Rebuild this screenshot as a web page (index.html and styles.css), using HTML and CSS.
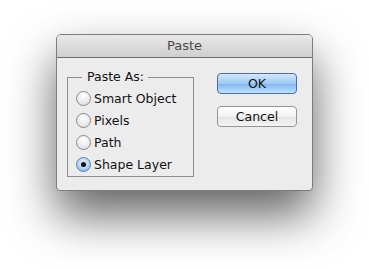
FILE: index.html
```html
<html>
<head>
    <meta charset="utf-8">
    <title>Paste</title>
    <link rel="stylesheet" href="styles.css">
</head>
<body>
<div class="window">
    <div class="titlebar">Paste</div>
    <div class="content">
        <fieldset class="group">
            <legend>Paste As:</legend>
            <label class="option"><span class="radio"></span>Smart Object</label>
            <label class="option"><span class="radio"></span>Pixels</label>
            <label class="option"><span class="radio"></span>Path</label>
            <label class="option"><span class="radio checked"></span>Shape Layer</label>
        </fieldset>
        <div class="buttons">
            <div class="btn default">OK</div>
            <div class="btn">Cancel</div>
        </div>
    </div>
</div>
</body>
</html>
```

FILE: styles.css
```css
*{
    margin: 0px;
    padding: 0px;
    box-sizing: border-box;
}
body{
    background-color: #ffffff;
    font-family: "DejaVu Sans", "Liberation Sans", sans-serif;
    font-size: 12.5px;
    color: #111;
}
/* dialog window */
.window{
    width: 257px;
    height: 157px;
    margin: 34px 0 0 56px;
    border: 1px solid #7c7c7c;
    border-radius: 5px 5px 4px 4px;
    background: #ececec;
    box-shadow: 0 24px 48px rgba(0,0,0,0.62);
    overflow: hidden;
}
.titlebar{
    height: 23px;
    line-height: 22px;
    text-align: center;
    font-size: 13px;
    color: #4a4a4a;
    background: linear-gradient(#e9e9e9, #cfcfcf);
    border-bottom: 1px solid #6e6e6e;
}
.content{
    display: flex;
    align-items: flex-start;
    padding: 0 15px 0 10px;
}
/* Paste As group */
.group{
    width: 127px;
    margin-top: 12px;
    padding: 3px 0 1px 8px;
    border: 1px solid #8d8d8d;
}
.group legend{
    margin-left: 6px;
    padding: 0 4px 0 5px;
    line-height: 14px;
}
.option{
    display: flex;
    align-items: center;
    height: 22px;
    gap: 3px;
}
.radio{
    width: 15px;
    height: 15px;
    border-radius: 50%;
    border: 1px solid #8a8a8a;
    background: radial-gradient(circle at 50% 30%, #ffffff, #e6e6e6 70%, #d0d0d0);
    display: flex;
    align-items: center;
    justify-content: center;
}
.radio.checked{
    border-color: #5f7fab;
    background: radial-gradient(circle at 50% 35%, #e6f2fd, #a9d0f5 60%, #6fa7e4);
}
.radio.checked::after{
    content: "";
    width: 5px;
    height: 5px;
    border-radius: 50%;
    background: #111;
}
/* buttons */
.buttons{
    margin: 15px 0 0 auto;
    display: flex;
    flex-direction: column;
    gap: 12px;
}
.btn{
    width: 80px;
    height: 21px;
    line-height: 19px;
    text-align: center;
    border: 1px solid #959595;
    border-radius: 4px;
    background: linear-gradient(#ffffff, #f2f2f2 50%, #e4e4e4 51%, #f4f4f4);
}
.btn.default{
    border-color: #4e6ea1;
    background: linear-gradient(#d4e8fc, #9ccaf4 50%, #7cb6f0 51%, #bfe2fd);
}
```
